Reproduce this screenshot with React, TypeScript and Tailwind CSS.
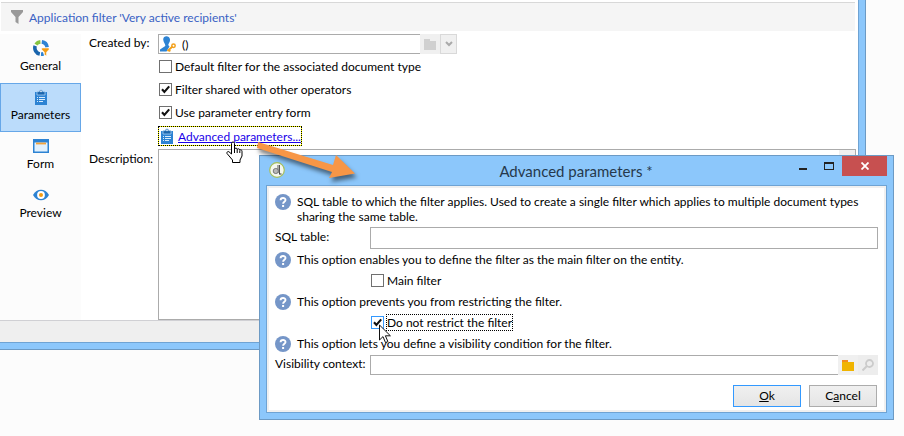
import { ReactNode } from "react";

function Check({ label, checked = false, focused = false }: { label: string; checked?: boolean; focused?: boolean }) {
  return (
    <label className="flex h-[17px] w-fit items-center gap-[2px]">
      <span className="grid">
        <input
          type="checkbox"
          defaultChecked={checked}
          className={`peer col-start-1 row-start-1 size-[13px] appearance-none border bg-white ${focused ? "border-[#3399ff]" : "border-[#707070]"}`}
        />
        <svg viewBox="0 0 13 13" className="pointer-events-none invisible col-start-1 row-start-1 size-[13px] peer-checked:visible">
          <path d="M3 6.2 5.4 9 10.2 3.4" fill="none" stroke="#111" strokeWidth="2.1" />
        </svg>
      </span>
      <span className={`border ${focused ? "border-dotted border-black" : "border-transparent"}`}>{label}</span>
    </label>
  );
}

function Clipboard() {
  return (
    <svg viewBox="0 0 16 16" className="size-4 shrink-0">
      <path d="M2 3h12v13H2z" fill="#2d83d3" />
      <path d="M4 2.6h2.2a1.8 1.8 0 0 1 3.6 0H12V6H4z" fill="#1a65ad" stroke="#bbddfa" strokeWidth=".7" />
      <circle cx="8" cy="2.4" r=".8" fill="#fff" />
      <path d="M4 8.5h1M6 8.5h6M4 10.5h1M6 10.5h6M4 12.5h1M6 12.5h4" stroke="#d9ecfc" />
    </svg>
  );
}

function GeneralIcon() {
  return (
    <svg viewBox="0 0 16 16" className="size-4">
      <g fill="none" strokeWidth="3.6">
        <path d="M8.8 1.9A6.2 6.2 0 0 1 14.1 7.2" stroke="#2d83d3" />
        <path d="M2.9 4.5A6.2 6.2 0 0 1 7.4 1.9" stroke="#86c440" />
        <path d="M2.2 5.9A6.2 6.2 0 0 0 6.8 14" stroke="#1a65ad" />
        <path d="M8 14.1A6.2 6.2 0 0 0 10.5 13.7" stroke="#2d83d3" />
      </g>
      <path d="M8.7 8H16v1.5l-2.5 2.8V16l-2.1-1.4v-2.3L8.7 9.5z" fill="#f39c12" stroke="#fff" strokeWidth=".5" />
    </svg>
  );
}

function FormIcon() {
  return (
    <svg viewBox="0 0 16 16" className="size-4">
      <path d="M0 1h16v14H0z" fill="#2d83d3" />
      <path d="M1.5 4.5h13v9h-13z" fill="#e2f1fd" />
      <path d="M3 5.5h10" stroke="#f2a33a" strokeWidth="1.8" />
    </svg>
  );
}

function EyeIcon() {
  return (
    <svg viewBox="0 0 16 16" className="size-4">
      <path d="M0 8C3.5 1 12.5 1 16 8 12.5 15 3.5 15 0 8z" fill="#2d83d3" />
      <circle cx="8" cy="8" r="3.9" fill="#fff" />
      <circle cx="8" cy="8" r="2" fill="#f39c12" />
    </svg>
  );
}

function SideItem({ icon, label, active = false }: { icon: ReactNode; label: string; active?: boolean }) {
  return (
    <button
      type="button"
      className={`flex h-[49px] w-full flex-col items-center gap-px border pt-[5px] ${active ? "border-[#66a7e8] bg-[#bbdcfb]" : "border-transparent"}`}
    >
      {icon}
      <span className="leading-[17px]">{label}</span>
    </button>
  );
}

function Folder({ back, front }: { back: string; front: string }) {
  return (
    <svg viewBox="0 0 12 11" className="h-[11px] w-3">
      <path d="M0 0h6v2H0z" fill={back} />
      <path d="M0 2h12v9H0z" fill={front} />
    </svg>
  );
}

function Help({ children }: { children: ReactNode }) {
  return (
    <div className="flex gap-[6px]">
      <svg viewBox="0 0 16 16" className="size-4 shrink-0">
        <circle cx="8" cy="8" r="8" fill="#7596c8" />
        <path d="M5.6 6.3C5.6 3.2 10.5 3.3 10.5 6 10.5 7.7 8.1 7.7 8.1 9.7" fill="none" stroke="#fff" strokeWidth="1.9" />
        <path d="M7.1 11h2v2h-2z" fill="#fff" />
      </svg>
      <p className="leading-[15px]">{children}</p>
    </div>
  );
}

function MainWindow() {
  return (
    <section className="mr-[38px] border-r border-b border-[#6c9ac4] bg-[#8cc7fb] pr-[6px] pb-[6px]">
      <div className="border-r border-b border-[#6fa3d3] bg-white pt-[2px]">
        <header className="mr-[3px] ml-px flex h-[29px] items-center gap-[6px] border-t border-[#d8d8d8] bg-[#f5f5f5] pl-[10px] text-[#3a62c4]">
          <svg viewBox="0 0 12 14" className="h-[14px] w-3">
            <path d="M0 0h12v2L7.5 7v7L4.5 12V7L0 2z" fill="#999" />
          </svg>
          <h1>Application filter 'Very active recipients'</h1>
        </header>
        <div className="flex pt-[3px]">
          <nav className="w-[81px] shrink-0 bg-[#fcfcfc]">
            <SideItem icon={<GeneralIcon />} label="General" />
            <SideItem icon={<Clipboard />} label="Parameters" active />
            <SideItem icon={<FormIcon />} label="Form" />
            <SideItem icon={<EyeIcon />} label="Preview" />
          </nav>
          <div className="grid flex-1 grid-cols-[69px_1fr] gap-y-[3px] pr-[2px] pl-2">
            <label htmlFor="created" className="leading-[18px]">Created by:</label>
            <div className="flex h-5">
              <div className="flex w-[262px] items-center gap-[6px] border border-r-0 border-[#ababab] pl-px">
                <svg viewBox="0 0 16 16" className="size-4 shrink-0">
                  <path d="M3.2 3.5C3.2-.8 9.5-1 10 3.5 10.2 6 8.8 7 8.2 9L9.500 10.500 6.500 15.500H0V13.500L5.300 10C5.500 8 3.500 6.500 3.2 3.500z" fill="#2d83d3" />
                  <path d="m7.5 15 5-4.5M8.8 13.8l1.5 1.5" stroke="#f2a01c" strokeWidth="1.8" />
                  <circle cx="13.5" cy="9.7" r="1.7" fill="none" stroke="#f2a01c" strokeWidth="1.5" />
                </svg>
                <input id="created" defaultValue="()" className="min-w-0 flex-1 outline-none" />
              </div>
              <button type="button" aria-label="Browse" className="grid w-5 place-items-center bg-[#f0f0f0]">
                <Folder back="#d0d0d0" front="#d0d0d0" />
              </button>
              <button type="button" aria-label="Open list" className="grid w-[17px] place-items-center border border-[#d9d9d9] bg-[#f0f0f0]">
                <svg viewBox="0 0 8 6" className="h-[6px] w-2">
                  <path d="m1 1 3 3 3-3" fill="none" stroke="#aaa" strokeWidth="2" />
                </svg>
              </button>
            </div>
            <div className="col-start-2 flex flex-col gap-[6px] pt-px pb-[2px] pl-px">
              <Check label="Default filter for the associated document type" />
              <Check label="Filter shared with other operators" checked />
              <Check label="Use parameter entry form" checked />
            </div>
            <a href="#advanced" className="col-start-2 w-[144px] border border-dotted border-black bg-[#ffff00] text-[#1a00e8] underline">
              <span className="flex h-[18px] items-center gap-[3px] bg-white whitespace-nowrap">
                <Clipboard />
                Advanced parameters...
              </span>
            </a>
            <label htmlFor="description" className="pt-px leading-[18px]">Description:</label>
            <div className="flex h-[171px] border border-[#ababab]">
              <textarea id="description" className="min-w-0 flex-1 resize-none outline-none" />
              <div className="w-4 bg-[#f0f0f0]" />
            </div>
          </div>
        </div>
        <footer className="h-[22px] border-t border-[#d0d0d4] bg-[#efefef]" />
      </div>
    </section>
  );
}

function Dialog() {
  return (
    <section
      role="dialog"
      aria-label="Advanced parameters"
      className="absolute top-[155px] right-[10px] left-[259px] border border-[#6c9ac4] bg-[#8cc7fb] px-[6px] pb-[6px]"
    >
      <header className="flex h-[29px] items-start">
        <svg viewBox="0 0 16 16" className="mt-[6px] ml-[3px] size-4">
          <circle cx="8" cy="8" r="7.3" fill="#f4f7ef" stroke="#a6bf5c" strokeWidth="1.2" />
          <path d="M9 3v8M10.5 3v9" stroke="#555" />
          <circle cx="6.8" cy="9" r="2.6" fill="#b8b8b8" stroke="#666" strokeWidth=".8" />
          <path d="M10 12h2.5" stroke="#333" />
        </svg>
        <h2 className="flex-1 pl-[78px] text-center text-[15px] leading-[30px] text-[#26394c]">Advanced parameters *</h2>
        <div className="flex h-5">
          <button type="button" aria-label="Minimize" className="grid w-[27px] place-items-center pt-[6px]">
            <span className="h-[2px] w-2 bg-[#222]" />
          </button>
          <button type="button" aria-label="Maximize" className="grid w-[26px] place-items-center">
            <span className="h-2 w-[10px] border border-t-2 border-[#222]" />
          </button>
          <button type="button" aria-label="Close" className="grid w-[45px] place-items-center bg-[#c75050]">
            <svg viewBox="0 0 8 8" className="size-2">
              <path d="m.5.5 7 7m0-7-7 7" stroke="#fff" strokeWidth="1.8" />
            </svg>
          </button>
        </div>
      </header>
      <div className="border border-[#6fa3d3] bg-[#f0f0f0] p-[2px]">
        <div className="flex flex-col gap-[5px] bg-white px-[6px] pt-[6px] pb-[3px]">
          <Help>
            SQL table to which the filter applies. Used to create a single filter which applies to multiple document types sharing the same table.
          </Help>
          <div className="-my-[2px] flex">
            <label htmlFor="sql" className="w-[95px] leading-[20px]">SQL table:</label>
            <input id="sql" className="h-[22px] min-w-0 flex-1 border border-[#ababab] outline-none" />
          </div>
          <Help>This option enables you to define the filter as the main filter on the entity.</Help>
          <div className="-mt-px pl-[96px]"><Check label="Main filter" /></div>
          <Help>This option prevents you from restricting the filter.</Help>
          <div className="-mt-px pl-[96px]"><Check label="Do not restrict the filter" checked focused /></div>
          <Help>This option lets you define a visibility condition for the filter.</Help>
          <div className="-mt-[2px] flex">
            <label htmlFor="visibility" className="w-[95px] leading-[18px]">Visibility context:</label>
            <input id="visibility" className="h-[20px] min-w-0 flex-1 border border-r-0 border-[#ababab] outline-none" />
            <button type="button" aria-label="Choose folder" className="grid w-5 place-items-center bg-[#f0f0f0]">
              <Folder back="#f28c1e" front="#f0b400" />
            </button>
            <button type="button" aria-label="Search" className="grid w-5 place-items-center bg-[#ededed]">
              <svg viewBox="0 0 12 12" className="size-3">
                <circle cx="7.5" cy="4.5" r="3.5" fill="none" stroke="#cbcbcb" strokeWidth="1.8" />
                <path d="m5 7-4.5 4.5" stroke="#cbcbcb" strokeWidth="2" />
              </svg>
            </button>
          </div>
          <div className="flex justify-end gap-2 pt-[5px] pr-px">
            <button type="button" className="h-[22px] w-[68px] border border-[#3399ff] bg-linear-to-b from-[#f0f0f0] to-[#e5e5e5] leading-[18px]"><u>O</u>k</button>
            <button type="button" className="h-[22px] w-[68px] border border-[#acacac] bg-linear-to-b from-[#f0f0f0] to-[#e5e5e5] leading-[18px]">C<u>a</u>ncel</button>
          </div>
        </div>
      </div>
    </section>
  );
}

function Pointers() {
  return (
    <>
      <svg viewBox="0 0 120 56" className="pointer-events-none absolute top-[136px] left-[250px] h-[56px] w-[120px] drop-shadow-[2px_4px_2px_rgba(0,0,0,0.5)]">
        <path d="M8 6 83 29 86 19 105 37.500 79 42 82 36 7 12z" fill="#f79646" />
      </svg>
      <svg viewBox="0 0 17 22" className="pointer-events-none absolute top-[141px] left-[226px] h-[22px] w-[17px]">
        <path d="M5.5 13V2.5a1.5 1.5 0 0 1 3 0V8a1.4 1.4 0 0 1 2.7.5 1.4 1.4 0 0 1 2.6.7 1.3 1.3 0 0 1 2.2 1V15l-2 4v2.5H6.5V19L1 12.5C.5 11 2 10 3 10.8z" fill="#fff" stroke="#000" />
        <path d="M8.5 8v4M11.2 8.5V12M13.8 9.5V12" stroke="#000" />
      </svg>
      <svg viewBox="0 0 13 20" className="pointer-events-none absolute top-[324px] left-[379px] h-5 w-[13px]">
        <path d="M.5 1v15l3.5-3.4 2.5 6 2.4-1-2.5-5.8h5z" fill="#fff" stroke="#111" />
      </svg>
    </>
  );
}

export default function App() {
  return (
    <main className="relative min-h-screen bg-[#fcfcfc] font-[Lato,'Open_Sans',sans-serif] text-[12px] leading-[15px] text-black">
      <MainWindow />
      <Dialog />
      <Pointers />
    </main>
  );
}
